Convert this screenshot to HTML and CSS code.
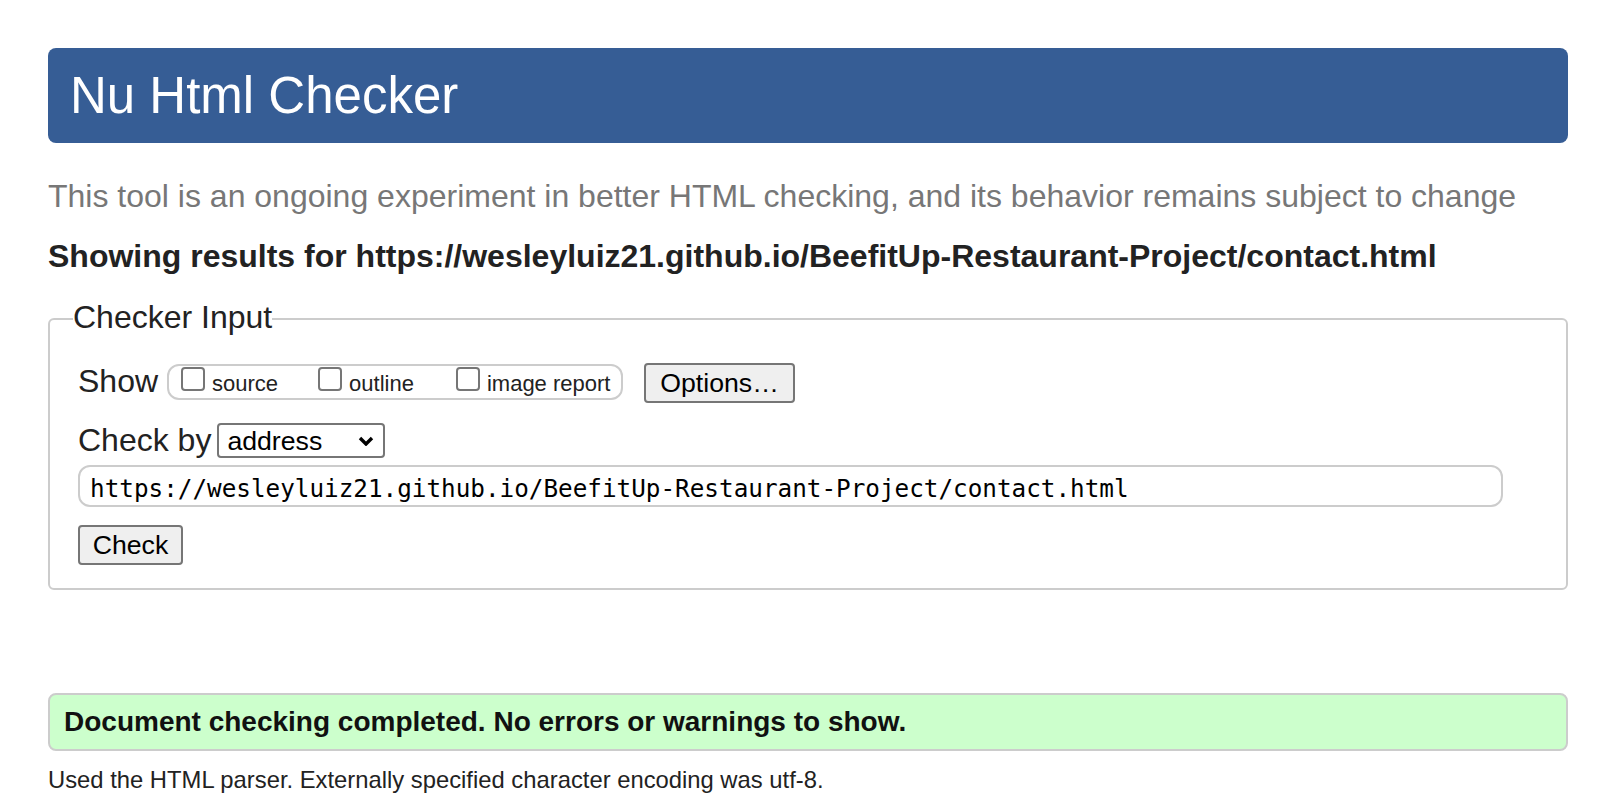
FILE: index.html
```html
<!DOCTYPE html>
<html lang="en">
<head>
<meta charset="utf-8">
<title>Nu Html Checker</title>
<link rel="stylesheet" href="styles.css">
</head>
<body>
<h1 class="title">Nu Html Checker</h1>
<p class="intro">This tool is an ongoing experiment in better HTML checking, and its behavior remains subject to change</p>
<p class="results-for">Showing results for https://wesleyluiz21.github.io/BeefitUp-Restaurant-Project/contact.html</p>
<form class="checker-form">
  <fieldset class="checker-input">
    <legend class="checker-legend">Checker Input</legend>
    <div class="row row-show">
      <span class="row-label row-label-show">Show</span>
      <span class="show-group">
        <label class="opt"><input type="checkbox" class="cb"><span class="opt-text">source</span></label>
        <label class="opt opt-outline"><input type="checkbox" class="cb"><span class="opt-text">outline</span></label>
        <label class="opt opt-image"><input type="checkbox" class="cb"><span class="opt-text">image report</span></label>
      </span>
      <button type="button" class="btn btn-options">Options…</button>
    </div>
    <div class="row row-by">
      <label class="row-label row-label-by" for="docselect">Check by</label>
      <span class="select-wrap">
        <select id="docselect" class="select"><option>address</option><option>file upload</option><option>text input</option></select>
        <svg class="chevron" viewBox="0 0 16 10" aria-hidden="true"><path d="M2 2 L8 8 L14 2" fill="none" stroke="#000" stroke-width="3.4" stroke-linejoin="miter"/></svg>
      </span>
    </div>
    <div class="row row-url">
      <input class="url" type="url" value="https://wesleyluiz21.github.io/BeefitUp-Restaurant-Project/contact.html">
    </div>
    <div class="row row-submit">
      <button type="submit" class="btn btn-check">Check</button>
    </div>
  </fieldset>
</form>
<p class="success">Document checking completed. No errors or warnings to show.</p>
<p class="details">Used the HTML parser. Externally specified character encoding was utf-8.</p>
</body>
</html>
```
FILE: styles.css
```css
* {
  box-sizing: border-box;
}

body {
  margin: 0;
  padding: 48px 48px 0;
  font-family: "Liberation Sans", Arial, sans-serif;
  color: #222;
  background: #fff;
}

.title {
  margin: 0;
  height: 95px;
  line-height: 95px;
  padding-left: 22px;
  background: #365d95;
  color: #fff;
  font-size: 51px;
  font-weight: normal;
  border-radius: 8px;
}

.intro {
  margin: 33px 0 0;
  font-size: 32px;
  line-height: 40px;
  color: #777;
}

.results-for {
  margin: 20px 0 0;
  font-size: 32px;
  line-height: 40px;
  font-weight: bold;
  color: #222;
}

.checker-form {
  margin: 0;
}

.checker-input {
  margin: 25px 0 0;
  min-width: 0;
  border: 2px solid #ccc;
  border-radius: 6px;
  padding: 26px 24px 23px 28px;
}

.checker-legend {
  margin-left: -5px;
  padding: 0 0 4px;
  font-size: 32px;
  line-height: 32px;
  color: #222;
}

.row {
  display: flex;
  align-items: flex-start;
}

.row-show {
  height: 40px;
}

.row-label {
  font-size: 32px;
  line-height: 32px;
  color: #222;
}

.row-label-show {
  margin-top: 2px;
}

.show-group {
  display: flex;
  align-items: flex-start;
  flex: none;
  width: 456px;
  height: 36px;
  margin: 1px 0 0 9px;
  padding: 1px 0 0 12px;
  border: 2px solid #ccc;
  border-radius: 12px;
}

.opt {
  display: flex;
  align-items: flex-start;
  flex: none;
  white-space: nowrap;
  font-size: 22px;
  line-height: 24px;
  color: #222;
}

.opt-outline {
  margin-left: 40px;
}

.opt-image {
  margin-left: 42px;
}

.cb {
  appearance: none;
  -webkit-appearance: none;
  flex: none;
  margin: 0;
  width: 24px;
  height: 24px;
  border: 2px solid #767676;
  border-radius: 4px;
  background: #fff;
}

.opt-text {
  margin: 4.5px 0 0 7px;
}

.btn {
  font-family: "Liberation Sans", Arial, sans-serif;
  font-size: 26.67px;
  color: #000;
  background: #efefef;
  border: 2px solid #767676;
  border-radius: 4px;
  padding: 0;
}

.btn-options {
  flex: none;
  margin-left: 21px;
  width: 151px;
  height: 40px;
}

.row-by {
  margin-top: 20px;
}

.row-label-by {
  margin-top: 1px;
}

.select-wrap {
  position: relative;
  display: block;
  margin-left: 6px;
}

.select {
  appearance: none;
  -webkit-appearance: none;
  display: block;
  width: 168px;
  height: 35px;
  margin: 0;
  padding: 0 0 0 8px;
  border: 2px solid #767676;
  border-radius: 4px;
  background: #fff;
  font-family: "Liberation Sans", Arial, sans-serif;
  font-size: 26.67px;
  color: #000;
}

.chevron {
  position: absolute;
  right: 11px;
  top: 13px;
  width: 16px;
  height: 10px;
  pointer-events: none;
}

.row-url {
  margin-top: 7px;
}

.url {
  width: 1425px;
  height: 42px;
  margin: 0;
  padding: 4px 10px 0;
  border: 2px solid #ccc;
  border-radius: 12px;
  font-family: "DejaVu Sans Mono", "Liberation Mono", monospace;
  font-size: 24.3px;
  color: #000;
  background: #fff;
}

.row-submit {
  margin-top: 18px;
}

.btn-check {
  width: 105px;
  height: 40px;
}

.success {
  margin: 103px 0 0;
  padding: 11px 14px;
  border: 2px solid #ccc;
  border-radius: 8px;
  background: #ccffcc;
  font-size: 28px;
  line-height: 32px;
  font-weight: bold;
  color: #111;
}

.details {
  margin: 15px 0 0;
  font-size: 23.8px;
  color: #222;
}
```
